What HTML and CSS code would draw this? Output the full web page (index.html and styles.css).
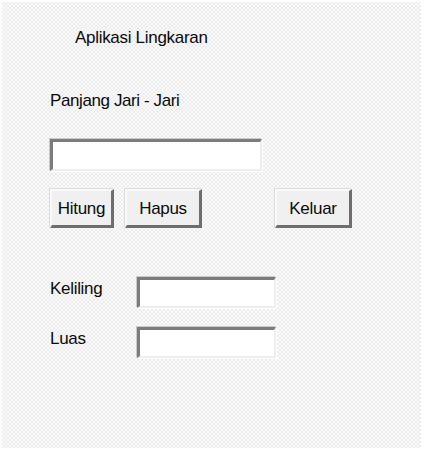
FILE: index.html
```html
<!DOCTYPE html>
<html>
<head>
<meta charset="utf-8">
<link rel="stylesheet" href="styles.css">
</head>
<body>
<div class="form">
  <div class="title">Aplikasi Lingkaran</div>
  <div class="label-top">Panjang Jari - Jari</div>
  <div class="field field-wide"></div>
  <div class="buttons">
    <div class="btn btn-hitung">Hitung</div>
    <div class="btn btn-hapus">Hapus</div>
    <div class="btn btn-keluar">Keluar</div>
  </div>
  <div class="row row-keliling">
    <div class="row-label">Keliling</div>
    <div class="field field-small"></div>
  </div>
  <div class="row row-luas">
    <div class="row-label">Luas</div>
    <div class="field field-small"></div>
  </div>
</div>
</body>
</html>
```

FILE: styles.css
```css
html, body {
  margin: 0;
  padding: 0;
  background: #ffffff;
}
body {
  width: 425px;
  height: 450px;
  overflow: hidden;
  font-family: "Liberation Sans", Arial, sans-serif;
  font-size: 17px;
  line-height: 18px;
  color: #0a0a0a;
}
.form {
  margin: 2px 4px 2px 2px;
  height: 419px;
  padding: 27px 0 0 48px;
  background-color: #ececec;
  background-image:
    radial-gradient(circle, #fbfbfb 0.8px, transparent 1px),
    radial-gradient(circle, #fbfbfb 0.8px, transparent 1px);
  background-size: 4px 4px, 4px 4px;
  background-position: 0 0, 2px 2px;
}
.title {
  margin-left: 25px;
  height: 18px;
  letter-spacing: -0.3px;
}
.label-top {
  margin-top: 45px;
  height: 18px;
  letter-spacing: -0.4px;
}
.field {
  box-sizing: border-box;
  background: #ffffff;
  border-top: 3px solid #7c7c7c;
  border-left: 3px solid #7c7c7c;
  border-bottom: 2px solid #eeeeee;
  border-right: 2px solid #eeeeee;
  box-shadow: -1px -1px 0 #c9c9c9, 1px 1px 0 #ffffff;
}
.field-wide {
  margin-top: 29px;
  width: 212px;
  height: 32px;
}
.buttons {
  display: flex;
  margin-top: 18px;
  height: 39px;
}
.btn {
  box-sizing: border-box;
  height: 39px;
  display: flex;
  align-items: center;
  justify-content: center;
  background: #f0f0f0;
  border-top: 2px solid #fafafa;
  border-left: 2px solid #fafafa;
  border-right: 3px solid #6e6e6e;
  border-bottom: 3px solid #6e6e6e;
  box-shadow: -1px -1px 0 #dcdcdc;
  padding-top: 2px;
  letter-spacing: -0.3px;
}
.btn-hitung {
  width: 64px;
}
.btn-hapus {
  width: 77px;
  margin-left: 11px;
}
.btn-keluar {
  width: 77px;
  margin-left: 73px;
}
.row {
  display: grid;
  grid-template-columns: 87px 139px;
  height: 31px;
}
.row-keliling {
  margin-top: 49px;
}
.row-luas {
  margin-top: 19px;
}
.row-label {
  padding-top: 3px;
  letter-spacing: -0.3px;
}
.field-small {
  height: 31px;
}
```
